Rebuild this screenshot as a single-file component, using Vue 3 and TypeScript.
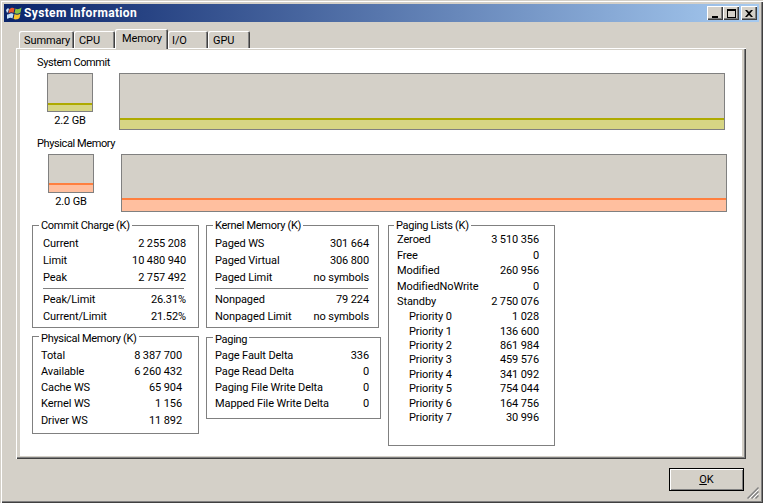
<script setup lang="ts">
interface Row { l: string; v: string; indent?: boolean; sep?: boolean; main?: boolean }
const tabs = ['Summary', 'CPU', 'Memory', 'I/O', 'GPU']
const commit: Row[] = [
  { l: 'Current', v: '2 255 208' }, { l: 'Limit', v: '10 480 940' }, { l: 'Peak', v: '2 757 492' },
  { l: 'Peak/Limit', v: '26.31%', sep: true }, { l: 'Current/Limit', v: '21.52%' },
]
const physical: Row[] = [
  { l: 'Total', v: '8 387 700' }, { l: 'Available', v: '6 260 432' }, { l: 'Cache WS', v: '65 904' },
  { l: 'Kernel WS', v: '1 156' }, { l: 'Driver WS', v: '11 892' },
]
const kernel: Row[] = [
  { l: 'Paged WS', v: '301 664' }, { l: 'Paged Virtual', v: '306 800' }, { l: 'Paged Limit', v: 'no symbols' },
  { l: 'Nonpaged', v: '79 224', sep: true }, { l: 'Nonpaged Limit', v: 'no symbols' },
]
const paging: Row[] = [
  { l: 'Page Fault Delta', v: '336' }, { l: 'Page Read Delta', v: '0' },
  { l: 'Paging File Write Delta', v: '0' }, { l: 'Mapped File Write Delta', v: '0' },
]
const lists: Row[] = [
  { l: 'Zeroed', v: '3 510 356' }, { l: 'Free', v: '0' }, { l: 'Modified', v: '260 956' },
  { l: 'ModifiedNoWrite', v: '0' }, { l: 'Standby', v: '2 750 076' },
  ...['1 028', '136 600', '861 984', '459 576', '341 092', '754 044', '164 756', '30 996'].map((v, i) => ({ l: `Priority ${i}`, v, indent: true })),
]
</script>

<template>
  <div class="window">
    <header class="title">
      <svg class="logo" width="16" height="16" viewBox="0 0 16 16">
        <path d="M0 5l2-2 1 1-1 3-1 1zM1 10l1-1 1 1-1 3-1 1z" fill="#cfe3f5" />
        <path d="M3 4.500C5 2.500 7 2.500 8.500 3.500L7.500 8C6 7 4.500 7 2.500 8.500z" fill="#e8582c" />
        <path d="M9.500 3.500C11 4.500 13 4.500 15.500 2.500L14.500 7.500C12.500 9 10 9 8.500 8z" fill="#8cc63f" />
        <path d="M2.500 9.500C4.500 8 6 8 7.500 9L6.500 13.500C5 12.500 3.500 12.500 1.500 14z" fill="#bfe0fa" />
        <path d="M8.500 9C10 10 12.500 10 14.500 8.500L13.500 13C11 15 9 14.500 7.500 14z" fill="#f7c52c" />
      </svg>
      <span class="title-text">System Information</span>
      <div class="caps">
        <button class="cap"><svg width="9" height="9" viewBox="0 0 9 9"><rect x="1" y="7" width="6" height="2" /></svg></button>
        <button class="cap"><svg width="9" height="9" viewBox="0 0 9 9"><path d="M0 0h9v9H0zM1 2v6h7V2z" fill-rule="evenodd" /></svg></button>
        <button class="cap cap-x"><svg width="8" height="7" viewBox="0 0 8 7"><path d="M0 0h2l2 2 2-2h2L5 3.500 8 7H6L4 5 2 7H0l3-3.500z" /></svg></button>
      </div>
    </header>

    <div class="body">
      <nav class="tabs">
        <div v-for="t in tabs" :key="t" class="tab" :class="['tab-' + t.replace('/', ''), { active: t === 'Memory' }]">{{ t }}</div>
      </nav>
      <section class="page">
        <div class="inner">
          <div class="graph-block">
            <div class="graph-label">System Commit</div>
            <div class="graph-row">
              <div class="small-wrap">
                <div class="graph small yellow"><i /></div>
                <div class="small-val">2.2 GB</div>
              </div>
              <div class="graph large yellow"><i /></div>
            </div>
          </div>
          <div class="graph-block second">
            <div class="graph-label">Physical Memory</div>
            <div class="graph-row">
              <div class="small-wrap">
                <div class="graph small orange"><i /></div>
                <div class="small-val">2.0 GB</div>
              </div>
              <div class="graph large orange"><i /></div>
            </div>
          </div>

          <div class="groups">
            <div class="col col1">
              <fieldset class="group g-commit">
                <legend>Commit Charge (K)</legend>
                <template v-for="r in commit" :key="r.l">
                  <hr v-if="r.sep" />
                  <div class="row"><span>{{ r.l }}</span><span>{{ r.v }}</span></div>
                </template>
              </fieldset>
              <fieldset class="group g-phys">
                <legend>Physical Memory (K)</legend>
                <div v-for="r in physical" :key="r.l" class="row"><span>{{ r.l }}</span><span>{{ r.v }}</span></div>
              </fieldset>
            </div>
            <div class="col col2">
              <fieldset class="group g-kernel">
                <legend>Kernel Memory (K)</legend>
                <template v-for="r in kernel" :key="r.l">
                  <hr v-if="r.sep" />
                  <div class="row"><span>{{ r.l }}</span><span>{{ r.v }}</span></div>
                </template>
              </fieldset>
              <fieldset class="group g-paging">
                <legend>Paging</legend>
                <div v-for="r in paging" :key="r.l" class="row"><span>{{ r.l }}</span><span>{{ r.v }}</span></div>
              </fieldset>
            </div>
            <div class="col col3">
              <fieldset class="group g-lists">
                <legend>Paging Lists (K)</legend>
                <div v-for="r in lists" :key="r.l" class="row" :class="{ indent: r.indent }"><span>{{ r.l }}</span><span>{{ r.v }}</span></div>
              </fieldset>
            </div>
          </div>
        </div>
      </section>
      <footer class="foot">
        <button class="ok"><u>O</u>K</button>
        <svg class="grip" width="12" height="12" viewBox="0 0 12 12">
          <path d="M11.500 .500L.500 11.500M11.500 4.500L4.500 11.500M11.500 8.500L8.500 11.500" stroke="#808080" stroke-width="1.400" fill="none" />
          <path d="M11.500 2.500L2.500 11.500M11.500 6.500L6.500 11.500" stroke="#fff" stroke-width="1" fill="none" />
        </svg>
      </footer>
    </div>
  </div>
</template>

<style>
html, body { margin: 0; background: #d4d0c8; }
</style>

<style scoped>
.window {
  width: 763px; height: 503px; box-sizing: border-box; padding: 4px;
  background: #d4d0c8; display: flex; flex-direction: column;
  font: 11px/13px Roboto, sans-serif; letter-spacing: -0.1px; color: #000;
  box-shadow: inset 1px 1px 0 #d4d0c8, inset 2px 2px 0 #fff, inset -1px -1px 0 #404040, inset -2px -2px 0 #808080;
}
.title {
  height: 18px; flex: none; display: flex; align-items: center; padding: 0 2px;
  background: linear-gradient(90deg, #0a246a, #a6caf0); color: #fff;
}
.logo { flex: none; margin-right: 2px; }
.title-text { flex: 1; font-weight: 700; font-size: 12px; letter-spacing: 0.35px; padding-top: 1px; }
.caps { display: flex; }
.cap {
  width: 16px; height: 14px; padding: 0; border: 0; background: #d4d0c8; display: flex; align-items: center; justify-content: center;
  box-shadow: inset 1px 1px 0 #fff, inset -1px -1px 0 #404040, inset -2px -2px 0 #808080;
}
.cap-x { margin-left: 2px; }
.body { flex: 1; display: flex; flex-direction: column; padding: 8px 14px 0 12px; min-height: 0; }
.tabs { display: flex; height: 18px; padding-left: 3px; align-items: flex-end; position: relative; z-index: 1; }
.tab {
  height: 17px; box-sizing: border-box; padding: 3px 0 0 5px; white-space: nowrap;
  box-shadow: inset 1px 1px 0 #fff, inset -1px 0 0 #404040, inset -2px 0 0 #808080;
  border-radius: 2px 2px 0 0; background: #d4d0c8;
}
.tab-Summary { width: 55px; }
.tab-CPU { width: 41px; }
.tab-IO { width: 40px; padding-left: 4px; }
.tab-GPU { width: 42px; }
.tab.active { width: 53px; height: 20px; margin-bottom: -1px; padding: 3px 0 0 7px; }
.page {
  width: 730px; height: 411px; box-sizing: border-box; padding: 2px 4px 3px 4px;
  background: #d4d0c8;
  box-shadow: inset 1px 1px 0 #fff, inset -1px -1px 0 #404040, inset -2px -2px 0 #808080;
}
.inner { background: #fff; height: 100%; box-sizing: border-box; padding: 6px 0 0 0; }
.graph-block { height: 81px; }
.graph-label { padding-left: 17px; height: 17px; letter-spacing: -0.4px; }
.graph-row { display: flex; align-items: flex-start; padding-left: 27px; gap: 26px; }
.second .graph-row { padding-left: 28px; gap: 27px; }
.small-wrap { width: 46px; display: flex; flex-direction: column; align-items: center; }
.small-val { margin-top: 2px; }
.graph {
  box-sizing: border-box; border: 1px solid #808080; background: #d4d0c8;
  display: flex; flex-direction: column; justify-content: flex-end;
}
.graph i { display: block; box-sizing: border-box; height: 8px; border-top: 2px solid; }
.small { width: 46px; height: 39px; }
.large { width: 606px; height: 57px; }
.second .large { height: 58px; }
.large i { height: 11px; }
.second .small i { height: 9px; }
.second .large i { height: 13px; }
.yellow i { background: #d6d584; border-color: #aeaa00; }
.orange i { background: #ffbf9f; border-color: #ff7f3f; }
.groups { display: flex; padding-left: 12px; margin-top: 1px; align-items: flex-start; }
.col { display: flex; flex-direction: column; }
.col1 { width: 167px; margin-right: 7px; }
.col2 { width: 175px; margin-right: 7px; }
.col3 { width: 167px; }
.group { margin: 0; min-width: 0; box-sizing: border-box; border: 1px solid #808080; }
.group legend { padding: 0 2px; letter-spacing: -0.3px; }
.row { display: flex; justify-content: space-between; white-space: nowrap; align-items: center; }
.row span { display: block; }
hr { border: 0; border-top: 1px solid #808080; margin: 2px 2px 2px 0; }
.g-commit .row, .g-kernel .row { height: 17px; }
.g-commit { height: 109px; padding: 3px 12px 0 10px; }
.g-commit legend { margin-left: -4px; }
.g-kernel { width: 173px; height: 109px; padding: 3px 9px 0 8px; margin-bottom: 1px; }
.g-kernel legend { margin-left: -2px; }
.g-kernel hr { margin-right: 1px; }
.g-phys { height: 106px; padding: 2px 16px 0 8px; }
.g-phys legend, .g-paging legend { margin-left: -2px; padding-top: 4px; }
.g-phys .row { height: 16.250px; }
.g-paging { height: 90px; padding: 1px 11px 0 8px; }
.g-paging .row { height: 16px; }
.g-lists { height: 227px; padding: 0 15px 0 8px; }
.g-lists legend { margin-left: -3px; }
.g-lists .row { height: 15.500px; }
.g-lists .indent { height: 14.430px; padding-left: 12px; }
.foot { flex: 1; display: flex; justify-content: flex-end; position: relative; padding: 9px 1px 0 0; align-items: flex-start; box-sizing: border-box; }
.ok {
  width: 75px; height: 23px; padding: 0; background: #d4d0c8; font: inherit; color: #000;
  border: 1px solid #000; box-shadow: inset 1px 1px 0 #fff, inset -1px -1px 0 #808080;
}
.grip { position: absolute; right: -14px; bottom: 0; }
</style>
